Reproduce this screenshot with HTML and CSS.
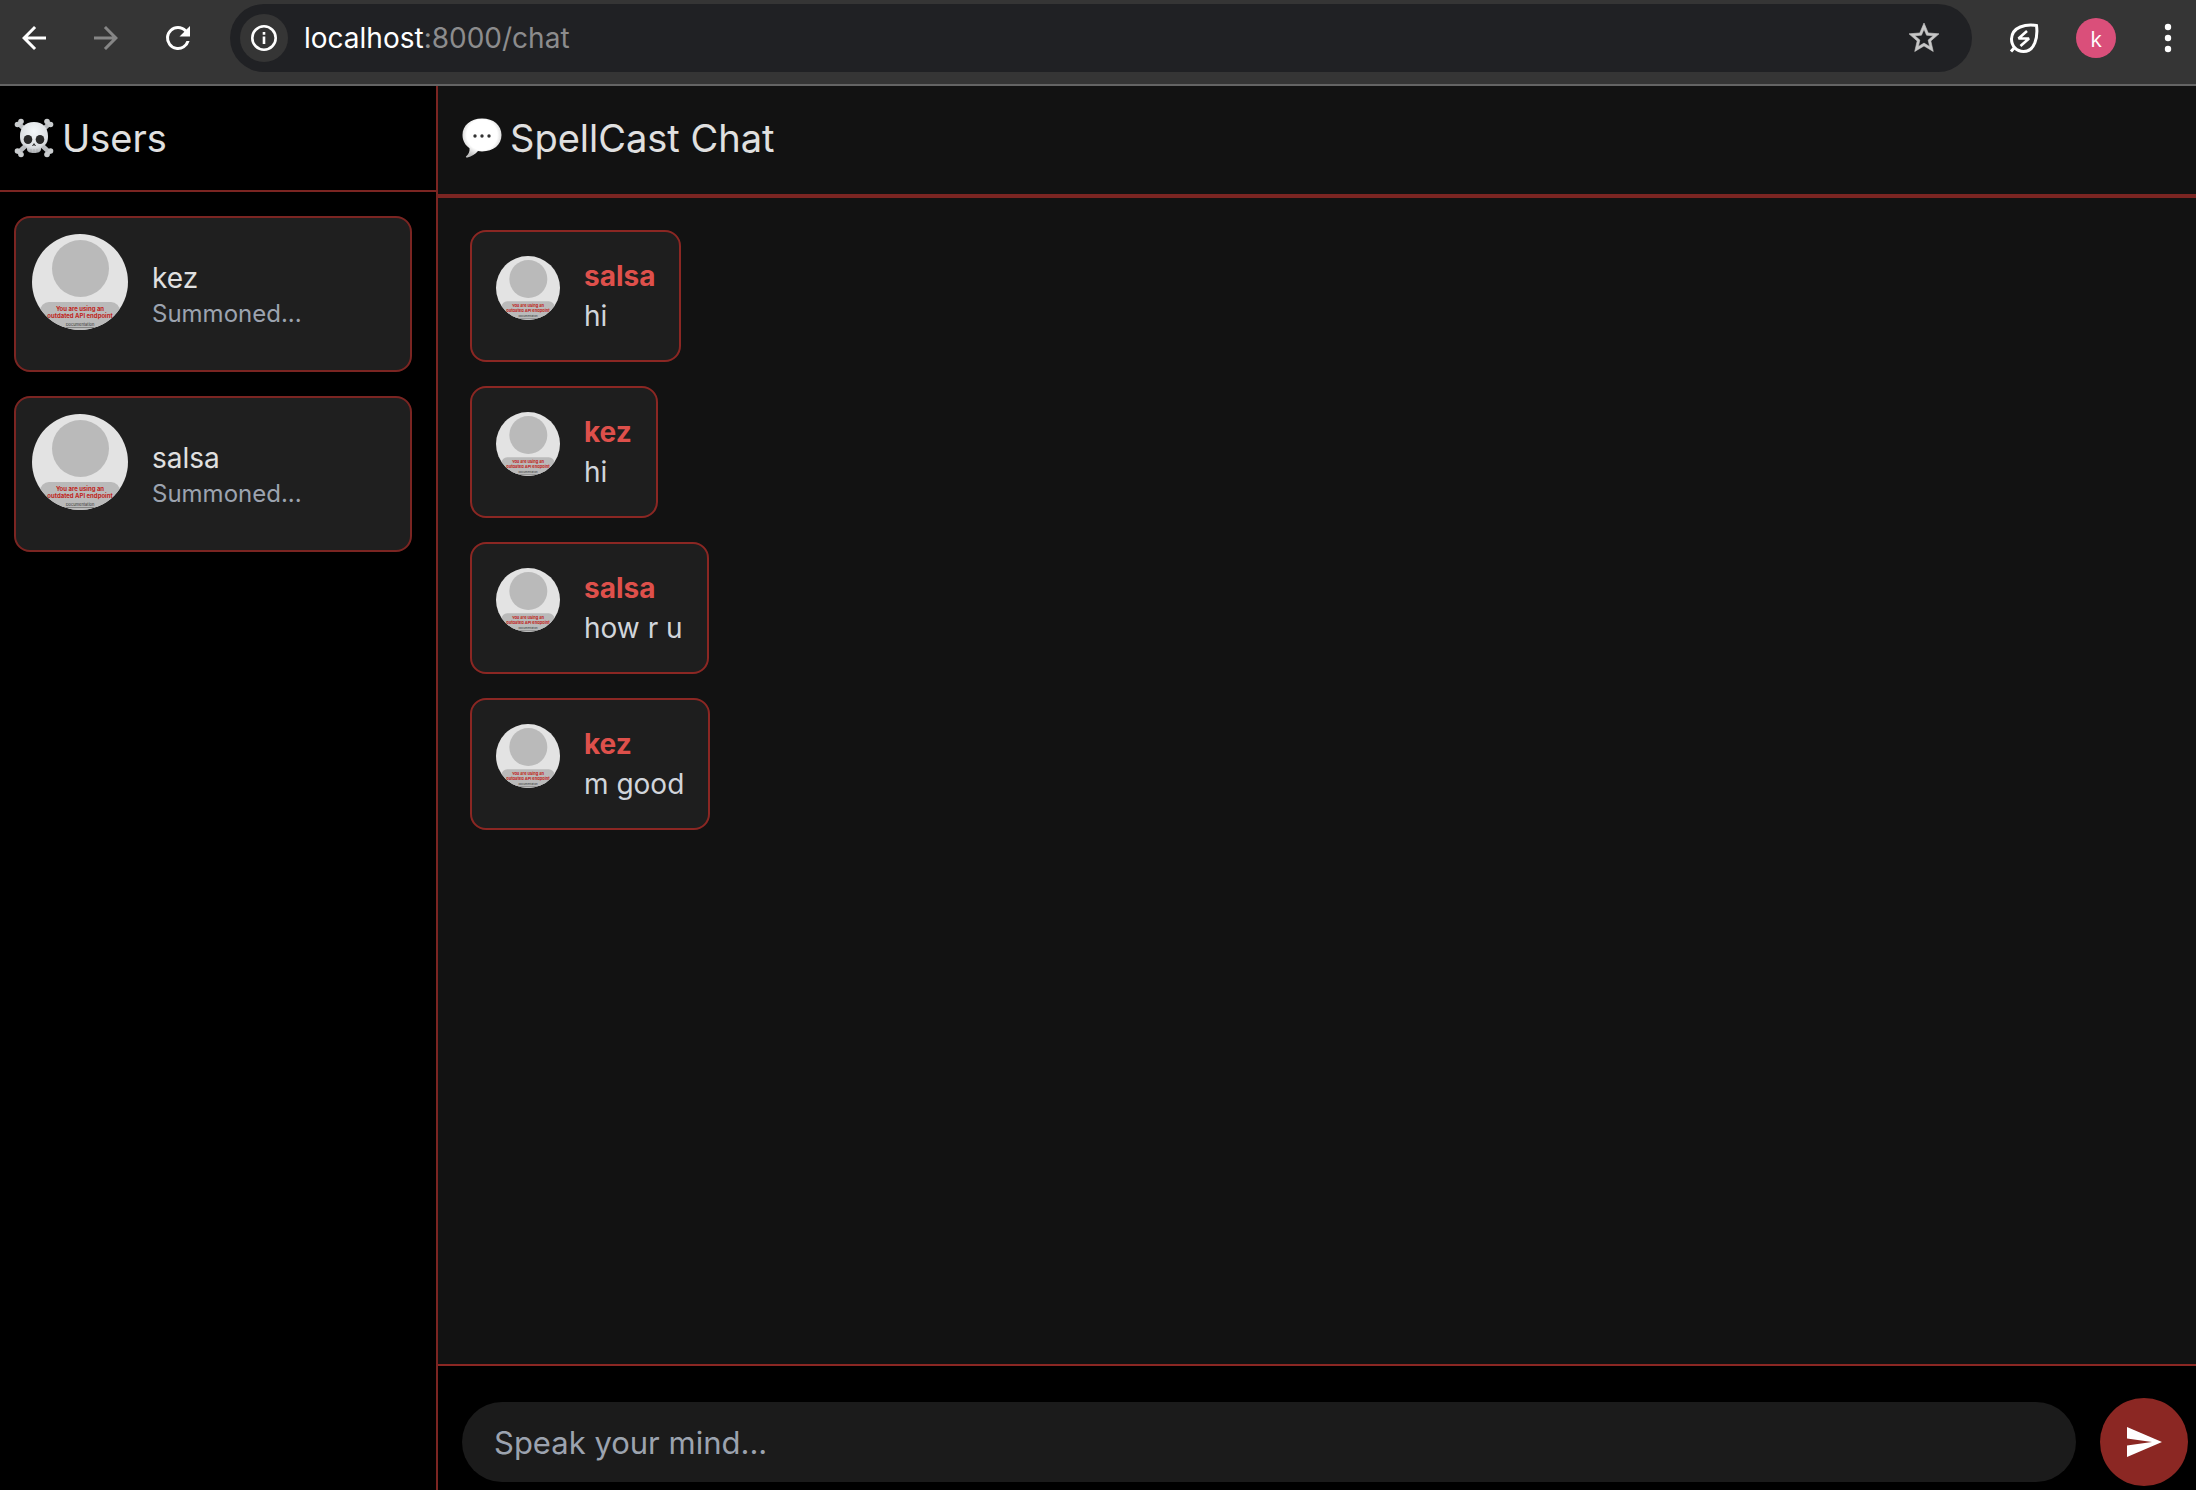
FILE: index.html
```html
<!DOCTYPE html>
<html lang="en">
<head>
<meta charset="utf-8">
<meta name="viewport" content="width=device-width, initial-scale=1">
<title>SpellCast Chat</title>
<link rel="stylesheet" href="styles.css">
</head>
<body>
<svg class="sprite" aria-hidden="true">
  <symbol id="avatar" viewBox="0 0 96 96">
    <rect width="96" height="96" fill="#e3e3e3"/>
    <circle cx="48.500" cy="34.500" r="28.500" fill="#bababa"/>
    <rect x="8" y="68" width="80" height="40" rx="9" fill="#bababa"/>
    <g text-anchor="middle" font-family="Inter, sans-serif">
      <text x="48" y="77" font-size="6" font-weight="700" fill="#c0241c">You are using an</text>
      <text x="48" y="84" font-size="6" font-weight="700" fill="#c0241c">outdated API endpoint</text>
      <text x="48" y="92" font-size="4" fill="#333" text-decoration="underline">Documentation</text>
    </g>
  </symbol>
</svg>

<header class="toolbar">
  <button class="tool" aria-label="Back"><svg width="36" height="36" viewBox="0 0 24 24" fill="currentColor"><path d="M20 11H7.83l5.59-5.59L12 4l-8 8 8 8 1.41-1.41L7.83 13H20z"/></svg></button>
  <button class="tool tool-off" aria-label="Forward"><svg width="36" height="36" viewBox="0 0 24 24" fill="currentColor"><path d="M12 4l-1.41 1.41L16.17 11H4v2h12.17l-5.58 5.59L12 20l8-8z"/></svg></button>
  <button class="tool reload" aria-label="Reload"><svg width="36" height="36" viewBox="0 0 24 24" fill="currentColor"><path d="M17.65 6.35A7.96 7.96 0 0 0 12 4a8 8 0 1 0 7.73 10h-2.08A6 6 0 1 1 12 6c1.66 0 3.14.69 4.22 1.78L13 11h7V4z"/></svg></button>
  <div class="omnibox">
    <button class="site-info" aria-label="Site information"><svg width="28" height="28" viewBox="0 0 28 28" fill="none" stroke="#fff" stroke-width="2.6"><circle cx="14" cy="14" r="11.7"/><path d="M14 12.5v7.5M14 8v2.8"/></svg></button>
    <a class="url" href="#chat"><span class="host">localhost</span>:8000/chat</a>
    <button class="star" aria-label="Bookmark"><svg width="36" height="36" viewBox="0 0 24 24" fill="currentColor" stroke="currentColor" stroke-width=".4"><path d="M22 9.24l-7.19-.62L12 2 9.19 8.63 2 9.24l5.46 4.73L5.82 21 12 17.27 18.18 21l-1.63-7.03zM12 15.4l-3.76 2.27 1-4.28-3.32-2.88 4.38-.38L12 6.1l1.71 4.04 4.38.38-3.32 2.88 1 4.28z"/></svg></button>
  </div>
  <button class="tool" aria-label="Energy saver"><svg width="32" height="32" viewBox="0 0 32 32" fill="none" stroke="currentColor" stroke-width="3"><path d="M28.500 3.500C18 2 4 4.500 3.500 17c0 7 5 12.500 12 12.500C27 29.500 30 15 28.500 3.500zM7 25l-4 4.500"/><path d="M19 9l-8.500 7.500h10.500l-8.500 7.500" stroke-width="2.600" stroke-linejoin="bevel"/></svg></button>
  <button class="profile" aria-label="Profile">k</button>
  <button class="tool" aria-label="Menu"><svg width="8" height="32" viewBox="0 0 8 32" fill="currentColor"><circle cx="4" cy="5" r="3.200"/><circle cx="4" cy="16" r="3.200"/><circle cx="4" cy="27" r="3.200"/></svg></button>
</header>

<div class="app">
  <aside class="sidebar">
    <h2 class="title">
      <svg width="40" height="40" viewBox="0 0 40 40" role="img" aria-label="Skull and crossbones">
        <defs><radialGradient id="bone" cx=".5" cy=".3" r=".75"><stop offset="0" stop-color="#f4f8fa"/><stop offset=".7" stop-color="#dadde0"/><stop offset="1" stop-color="#9b9fa3"/></radialGradient></defs>
        <g stroke="#b9bcbf" stroke-width="4.500" stroke-linecap="round"><path d="M5 6l30 28M35 6L5 34"/></g>
        <g fill="#c9ccce"><circle cx="3.500" cy="6.500" r="2.800"/><circle cx="7" cy="3.500" r="2.800"/><circle cx="36.500" cy="6.500" r="2.800"/><circle cx="33" cy="3.500" r="2.800"/><circle cx="3.500" cy="33" r="2.800"/><circle cx="7" cy="36.500" r="2.800"/><circle cx="36.500" cy="33" r="2.800"/><circle cx="33" cy="36.500" r="2.800"/></g>
        <path fill="url(#bone)" d="M20 4C11 4 6 10 6 18c0 5 1 7 3 9 2 1 4 2 4 4 0 3 3 4 7 4s7-1 7-4c0-2 2-3 4-4 2-2 3-4 3-9 0-8-5-14-14-14z"/>
        <g fill="#292929"><ellipse cx="14" cy="21.500" rx="4.300" ry="4.500"/><ellipse cx="26" cy="21.500" rx="4.300" ry="4.500"/><path d="M20 25l-2 3h1l1-1 1 1h1z"/></g>
        <path d="M17 31v3M20 31v4M23 31v3" stroke="#aaa" stroke-width=".8"/>
      </svg>
      Users
    </h2>
    <ul class="users">
      <li class="user"><svg class="avatar avatar-lg" role="img" aria-label="kez"><use href="#avatar"/></svg><div><p class="user-name">kez</p><p class="user-state">Summoned...</p></div></li>
      <li class="user"><svg class="avatar avatar-lg" role="img" aria-label="salsa"><use href="#avatar"/></svg><div><p class="user-name">salsa</p><p class="user-state">Summoned...</p></div></li>
    </ul>
  </aside>

  <main class="chat" id="chat">
    <h1 class="title chat-title">
      <svg width="40" height="40" viewBox="0 0 40 40" role="img" aria-label="Speech balloon">
        <defs><radialGradient id="balloon" cx=".5" cy=".42" r=".6"><stop offset=".65" stop-color="#fff"/><stop offset="1" stop-color="#bcbcbc"/></radialGradient></defs>
        <path fill="url(#balloon)" d="M20 .5C8.500.5.5 7.500.5 17c0 6 3 10.500 7 13.200.5 3-1 6.300-3.500 8.300-.5.800.5 1.300 1.500 1 4-1 8-3.500 10.500-6.500 1.300.3 2.600.4 4 .4 11.500 0 19.500-6.400 19.500-16.400S31.500.5 20 .5z"/>
        <g fill="#333"><circle cx="13" cy="18" r="1.700"/><circle cx="20" cy="18" r="1.700"/><circle cx="27" cy="18" r="1.700"/></g>
      </svg>
      SpellCast Chat
    </h1>
    <ol class="messages">
      <li class="message"><svg class="avatar" role="img" aria-label="salsa"><use href="#avatar"/></svg><div><p class="author">salsa</p><p>hi</p></div></li>
      <li class="message"><svg class="avatar" role="img" aria-label="kez"><use href="#avatar"/></svg><div><p class="author">kez</p><p>hi</p></div></li>
      <li class="message"><svg class="avatar" role="img" aria-label="salsa"><use href="#avatar"/></svg><div><p class="author">salsa</p><p>how r u</p></div></li>
      <li class="message"><svg class="avatar" role="img" aria-label="kez"><use href="#avatar"/></svg><div><p class="author">kez</p><p>m good</p></div></li>
    </ol>
    <form class="composer">
      <input class="field" type="text" placeholder="Speak your mind..." aria-label="Message">
      <button class="send" type="button" aria-label="Send"><svg width="36" height="32" viewBox="0 0 36 32" fill="#fff"><path d="M1 1l35 15L1 31V19.500L26 16 1 12.500z"/></svg></button>
    </form>
  </main>
</div>
</body>
</html>
```
FILE: styles.css
```css
* { box-sizing: border-box; margin: 0; padding: 0; }

body {
  display: flex;
  flex-direction: column;
  height: 100vh;
  background: #121212;
  color: #e0e0e0;
  font: 28px/40px Inter, "Liberation Sans", sans-serif;
}

ul, ol { list-style: none; }
button { border: 0; background: none; color: inherit; font: inherit; cursor: pointer; }
svg { display: block; flex: none; }
.sprite { display: none; }

/* Browser bar */
.toolbar {
  display: flex;
  align-items: center;
  height: 86px;
  flex: none;
  padding: 0 24px 8px 16px;
  border-bottom: 2px solid #646464;
  background: #353535;
  color: #fff;
}
.tool { flex: none; margin-right: 36px; }
.tool:last-child { margin-right: 0; }
.tool-off { color: #868686; }
.reload { margin-right: 34px; }
.omnibox {
  display: flex;
  align-items: center;
  flex: 1;
  height: 68px;
  margin-right: 36px;
  padding: 0 30px 0 10px;
  border-radius: 34px;
  background: #202124;
}
.site-info {
  display: grid;
  place-items: center;
  width: 48px;
  height: 48px;
  border-radius: 50%;
  background: #353535;
}
.url { flex: 1; margin-left: 16px; color: #8c8c8d; text-decoration: none; }
.host { color: #fff; }
.star { color: #c7c7c7; }
.profile {
  flex: none;
  width: 40px;
  height: 40px;
  margin-right: 48px;
  border-radius: 50%;
  background: #da4f7a;
  font: 22px/40px "Open Sans", sans-serif;
}

/* Layout */
.app { display: flex; flex: 1; min-height: 0; }
.sidebar { width: 438px; flex: none; border-right: 2px solid #7b2522; background: #000; }
.chat { display: flex; flex: 1; flex-direction: column; min-width: 0; }
.title {
  display: flex;
  align-items: center;
  gap: 8px;
  padding: 24px 14px;
  border-bottom: 2px solid #7b2522;
  font-size: 38px;
  line-height: 56px;
  font-weight: 400;
}
.chat-title { padding: 24px 24px 28px; border-bottom-width: 4px; }

/* People */
.users { display: flex; flex-direction: column; gap: 24px; padding: 24px 24px 24px 14px; }
.user {
  display: flex;
  align-items: center;
  gap: 24px;
  padding: 16px;
  border: 2px solid #7b2522;
  border-radius: 16px;
  background: #1f1f1f;
}
.user-state { color: #9ca3af; font-size: 24px; line-height: 32px; }
.avatar { width: 64px; height: 64px; border-radius: 50%; }
.avatar-lg { width: 96px; height: 96px; margin-bottom: 24px; }

/* Messages */
.messages {
  display: flex;
  flex: 1;
  flex-direction: column;
  align-items: flex-start;
  gap: 24px;
  min-height: 0;
  padding: 32px;
  overflow: auto;
}
.message {
  display: flex;
  gap: 24px;
  padding: 24px;
  border: 2px solid #8b2723;
  border-radius: 16px;
  background: #1e1e1e;
  color: #d1d5db;
}
.author { color: #de504b; font-weight: 700; }

/* Composer */
.composer {
  display: flex;
  align-items: center;
  gap: 24px;
  padding: 32px 8px 4px 24px;
  border-top: 2px solid #8b2723;
  background: #000;
}
.field {
  flex: 1;
  min-width: 0;
  height: 80px;
  padding: 0 32px;
  border: 0;
  border-radius: 40px;
  background: #1b1b1b;
  color: #e0e0e0;
  font: inherit;
  font-size: 31px;
}
.field::placeholder { color: #9ca3af; opacity: 1; }
.send {
  display: grid;
  place-items: center;
  width: 88px;
  height: 88px;
  border-radius: 50%;
  background: #8b2723;
}
```
